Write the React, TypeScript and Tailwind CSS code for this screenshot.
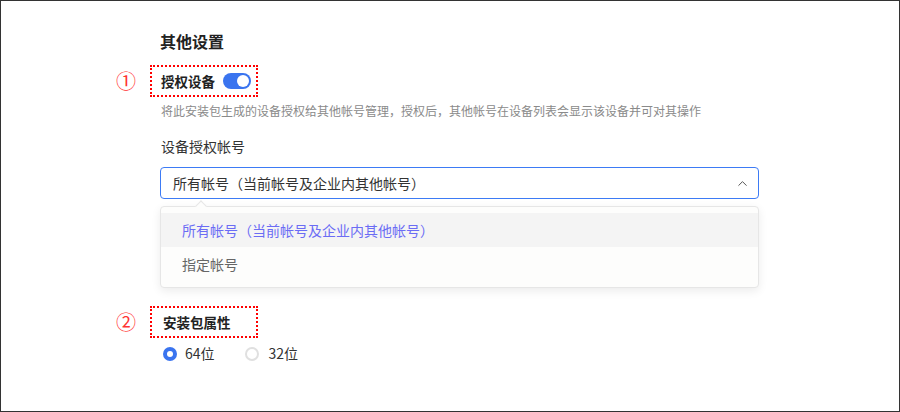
import { ChevronUp } from "lucide-react";

export default function App() {
  return (
    <div className="w-[900px] h-[412px] bg-white border border-[#333] font-['Noto_Sans_CJK_SC',sans-serif] text-[#333] overflow-hidden">
      <div className="pl-[114px] pt-[28px] flex flex-col">
        {/* Title */}
        <h2 className="ml-[45px] text-[16px] font-bold text-[#222] leading-[24px]">其他设置</h2>

        {/* ① 授权设备 */}
        <div className="mt-[12px] flex items-center gap-[13px]">
          <span className="w-[22px] text-center text-[20px] leading-none text-[#f33]">①</span>
          <div className="w-[108px] h-[32px] border-2 border-dotted border-[#f00] flex items-center pl-[9px] gap-[8px]">
            <span className="text-[13.5px] font-semibold text-[#222]">授权设备</span>
            <span className="w-[28px] h-[16px] rounded-full bg-[#3a74ef] flex items-center justify-end pr-[2px]">
              <span className="w-[12px] h-[12px] rounded-full bg-white" />
            </span>
          </div>
        </div>
        <p className="ml-[46px] mt-[4px] text-[12px] leading-[20px] text-[#8a8a8a]">
          将此安装包生成的设备授权给其他帐号管理，授权后，其他帐号在设备列表会显示该设备并可对其操作
        </p>

        {/* 设备授权帐号 */}
        <p className="ml-[46px] mt-[15px] text-[14px] leading-[20px] text-[#333]">设备授权帐号</p>
        <div className="relative ml-[45px] mt-[11px] w-[599px] mb-[107px]">
          <div className="h-[32px] border border-[#3d7bf5] rounded-[4px] flex items-center justify-between pl-[12px] pr-[8px]">
            <span className="text-[14px] text-[#333]">所有帐号（当前帐号及企业内其他帐号）</span>
            <ChevronUp size={15} strokeWidth={1.6} className="text-[#555]" />
          </div>

          {/* dropdown */}
          <div className="absolute left-0 top-[39px] w-[599px] h-[82px] bg-[#fdfdfc] border border-[#e6e6e6] rounded-[4px] shadow-[0_3px_10px_rgba(0,0,0,0.08)] py-[6px]">
            <span className="absolute -top-[5px] left-[36px] w-[8px] h-[8px] rotate-45 bg-[#fdfdfc] border-l border-t border-[#e6e6e6]" />
            <div className="h-[34px] bg-[#f4f4f4] flex items-center pl-[21px] text-[14px] text-[#6b6cf4]">
              所有帐号（当前帐号及企业内其他帐号）
            </div>
            <div className="h-[34px] flex items-center pl-[21px] text-[14px] text-[#666]">指定帐号</div>
          </div>
        </div>

        {/* ② 安装包属性 */}
        <div className="flex items-center gap-[13px]">
          <span className="w-[22px] text-center text-[20px] leading-none text-[#f33]">②</span>
          <div className="w-[108px] h-[32px] border-2 border-dotted border-[#f00] flex items-center pl-[11px]">
            <span className="text-[13.5px] font-semibold text-[#222]">安装包属性</span>
          </div>
        </div>
        <div className="ml-[48px] mt-[5px] flex items-center gap-[30px] text-[14px] text-[#333]">
          <label className="flex items-center gap-[8px]">
            <span className="w-[14px] h-[14px] rounded-full bg-[#3a74ef] flex items-center justify-center">
              <span className="w-[6px] h-[6px] rounded-full bg-white" />
            </span>
            64位
          </label>
          <label className="flex items-center gap-[10px]">
            <span className="w-[14px] h-[14px] rounded-full border-2 border-[#e0e0e0] bg-white" />
            32位
          </label>
        </div>
      </div>
    </div>
  );
}
